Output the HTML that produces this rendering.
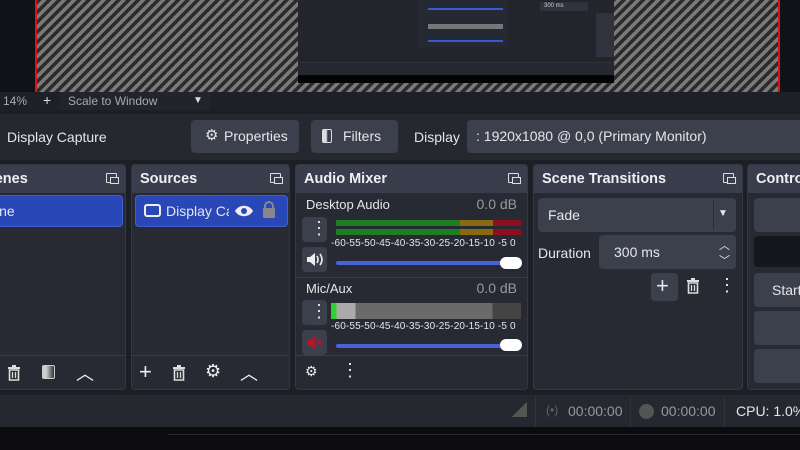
<!DOCTYPE html>
<html><head><meta charset="utf-8"><style>
*{box-sizing:border-box;margin:0;padding:0}
body{width:800px;height:450px;overflow:hidden;background:#1d1f26;font-family:"Liberation Sans",sans-serif;color:#e6e6ea;position:relative;font-size:14px;white-space:nowrap}
.a{position:absolute}
.stripes{background:repeating-linear-gradient(135deg,#2b2b2b 0 3.5px,#7a7a7a 3.5px 7px)}
.dock{position:absolute;top:164px;height:226px;background:#272a33;border:1px solid #343744;border-radius:4px;overflow:hidden}
.hd{height:28px;background:#3a3d4b;font-weight:bold;font-size:14.5px;padding:6px 8px;color:#f0f0f4}
.fl{position:absolute;right:8px;top:8px;width:11px;height:10px;border:1.5px solid #ddd;border-radius:1px}
.fl:after{content:"";position:absolute;left:3px;top:3px;width:7px;height:5px;border:1.5px solid #ddd;background:#3a3d4b}
.btn{position:absolute;background:#3c404d;border-radius:4px}
.ft{position:absolute;left:0;right:0;bottom:0;height:34px;border-top:1px solid #3a3d49}
.ic{position:absolute;color:#eee;font-size:18px}
.meter{position:absolute;height:6px}
.tick{position:absolute;font-size:10px;letter-spacing:0.15px}
</style></head><body>
<svg width="0" height="0" style="position:absolute"><defs><symbol id="tr" viewBox="0 0 14 16"><rect x="1" y="2" width="12" height="2" fill="#ddd"/><rect x="5" y="0" width="4" height="2" fill="#ddd"/><path d="M2.5 5h9v10h-9z" fill="none" stroke="#ddd" stroke-width="1.6"/><path d="M5.5 7v6M8.5 7v6" stroke="#ddd" stroke-width="1.3"/></symbol></defs></svg>
<!-- preview -->
<div class="a" style="left:0;top:0;width:800px;height:92px;background:#111218"></div>
<div class="a stripes" style="left:35px;top:0;width:745px;height:92px;border-left:2px solid #e01010;border-right:2px solid #e01010"></div>
<div class="a" style="left:298px;top:0;width:316px;height:83px;background:#23252d"></div>
<div class="a" style="left:298px;top:62px;width:316px;height:13px;background:#262830;border-top:1px solid #333"></div>
<div class="a" style="left:298px;top:75px;width:316px;height:8px;background:#050505"></div>
<div class="a" style="left:418px;top:0;width:90px;height:47px;background:#262933"></div>
<div class="a" style="left:428px;top:24px;width:75px;height:5px;background:#777"></div>
<div class="a" style="left:428px;top:40px;width:75px;height:2px;background:#3a5ad0"></div>
<div class="a" style="left:428px;top:8px;width:75px;height:2px;background:#3a5ad0"></div>
<div class="a" style="left:596px;top:13px;width:18px;height:44px;background:#30333d"></div>
<div class="a" style="left:540px;top:2px;width:48px;height:9px;background:#30333d;font-size:6px;color:#ccc;padding:1px 4px">300 ms</div>
<!-- zoom bar -->
<div class="a" style="left:0;top:92px;width:800px;height:18px;background:#1e2028;font-size:12px;color:#aaa">
<span class="a" style="left:3px;top:2px">14%</span><span class="a" style="left:43px;top:0;color:#ddd;font-size:14px">+</span>
<div class="a" style="left:60px;top:0;width:150px;height:18px;background:#22242c"></div>
<span class="a" style="left:68px;top:2px">Scale to Window</span>
<span class="a" style="left:193px;top:3px;color:#ddd;font-size:10px">▼</span></div>
<!-- source toolbar -->
<div class="a" style="left:0;top:114px;width:800px;height:46px;background:#262830"></div>
<span class="a" style="left:7px;top:129px;font-size:14px">Display Capture</span>
<div class="btn" style="left:191px;top:120px;width:108px;height:33px"><span class="a" style="left:14px;top:6px;font-size:15px">⚙</span><span class="a" style="left:33px;top:8px">Properties</span></div>
<div class="btn" style="left:311px;top:120px;width:87px;height:33px"><span class="a" style="left:11px;top:9px;width:10px;height:14px;border:1.5px solid #ddd;border-radius:2px;background:linear-gradient(90deg,#ddd 40%,#3c404d 60%)"></span><span class="a" style="left:32px;top:8px">Filters</span></div>
<span class="a" style="left:414px;top:129px">Display</span>
<div class="btn" style="left:467px;top:120px;width:340px;height:33px"><span class="a" style="left:9px;top:8px">: 1920x1080 @ 0,0 (Primary Monitor)</span></div>
<!-- scenes -->
<div class="dock" style="left:-10px;width:136px"><div class="hd"><span class="a" style="left:-14px;top:6px">Scenes</span></div><div class="fl"></div>
<div class="a" style="left:0;top:30px;width:132px;height:32px;background:#2a47b8;border-radius:4px;border:1px solid #4060d0"><span class="a" style="left:-17px;top:7px">Scene</span></div>
<div class="ft"><svg class="a" style="left:16px;top:9px" width="14" height="16"><use href="#tr"/></svg><span class="a" style="left:51px;top:9px;width:13px;height:14px;border:1.5px solid #ccc;border-radius:2px;background:linear-gradient(90deg,#ccc 30%,#333)"></span><span class="ic" style="left:85px;top:4px">︿</span><span class="ic" style="left:130px;top:4px">⋮</span></div></div>
<!-- sources -->
<div class="dock" style="left:131px;width:159px"><div class="hd">Sources</div><div class="fl"></div>
<div class="a" style="left:3px;top:30px;width:153px;height:32px;background:#2a47b8;border-radius:4px;border:1px solid #4060d0">
<span class="a" style="left:8px;top:8px;width:17px;height:13px;border:2px solid #eee;border-radius:3px"></span>
<span class="a" style="left:30px;top:7px;width:63px;overflow:hidden;white-space:nowrap">Display Capture</span>
<svg class="a" style="left:98px;top:8px" width="20" height="14"><path d="M1 7C5 0 15 0 19 7C15 14 5 14 1 7Z" fill="#eee"/><circle cx="10" cy="7" r="3" fill="#2a47b8"/></svg>
<span class="a" style="left:127px;top:12px;width:12px;height:10px;background:#888;border-radius:1px"></span><span class="a" style="left:128px;top:5px;width:10px;height:9px;border:2px solid #888;border-bottom:none;border-radius:5px 5px 0 0"></span></div>
<div class="ft"><span class="ic" style="left:7px;top:3px;font-size:22px">+</span><svg class="a" style="left:40px;top:9px" width="14" height="16"><use href="#tr"/></svg><span class="ic" style="left:73px;top:5px">⚙</span><span class="ic" style="left:108px;top:4px">︿</span><span class="ic" style="left:153px;top:4px">⋮</span></div></div>
<!-- audio mixer -->
<div class="dock" style="left:295px;width:233px"><div class="hd">Audio Mixer</div><div class="fl"></div>
<span class="a" style="left:10px;top:32px;font-size:13px">Desktop Audio</span><span class="a" style="right:10px;top:31px;color:#999;font-size:14px">0.0 dB</span>
<div class="btn" style="left:6px;top:52px;width:25px;height:25px"><span class="a" style="left:8px;top:1px;font-size:18px">⋮</span></div>
<div class="meter" style="left:40px;top:55px;width:185px;background:linear-gradient(90deg,#1f7d24 0 67%,#8a6a10 67% 85%,#8a1020 85%)"></div>
<div class="meter" style="left:40px;top:64px;width:185px;background:linear-gradient(90deg,#1f7d24 0 67%,#8a6a10 67% 85%,#8a1020 85%)"></div>
<span class="tick" style="left:35px;top:73px">-60-55-50-45-40-35-30-25-20-15-10 -5 0</span>
<div class="btn" style="left:6px;top:82px;width:25px;height:25px"><svg class="a" style="left:4px;top:5px" width="18" height="15"><path d="M1 5h3l5-4v13l-5-4H1z" fill="#eee"/><path d="M11 4q2 3.5 0 7M14 2q4 5.5 0 11" stroke="#eee" stroke-width="1.6" fill="none"/></svg></div>
<div class="a" style="left:40px;top:96px;width:180px;height:4px;background:#4a62d8;border-radius:2px"></div>
<div class="a" style="left:204px;top:92px;width:22px;height:12px;background:#fff;border-radius:6px"></div>
<div class="a" style="left:0;top:112px;width:233px;height:1px;background:#3a3d49"></div>
<span class="a" style="left:10px;top:116px;font-size:13px">Mic/Aux</span><span class="a" style="right:10px;top:115px;color:#999;font-size:14px">0.0 dB</span>
<div class="btn" style="left:6px;top:135px;width:25px;height:25px"><span class="a" style="left:8px;top:1px;font-size:18px">⋮</span></div>
<div class="a" style="left:35px;top:138px;width:190px;height:16px;background:linear-gradient(90deg,#2fd02f 0 3%,#aaa 3% 13%,#6a6a6a 13% 85%,#444 85%)"></div>
<span class="tick" style="left:35px;top:156px">-60-55-50-45-40-35-30-25-20-15-10 -5 0</span>
<div class="btn" style="left:6px;top:165px;width:25px;height:25px"><svg class="a" style="left:4px;top:5px" width="18" height="15"><path d="M1 5h3l5-4v13l-5-4H1z" fill="#b01828"/><path d="M11 5l5 5M16 5l-5 5" stroke="#b01828" stroke-width="1.6"/></svg></div>
<div class="a" style="left:40px;top:179px;width:180px;height:4px;background:#4a62d8;border-radius:2px"></div>
<div class="a" style="left:204px;top:174px;width:22px;height:12px;background:#fff;border-radius:6px"></div>
<div class="ft"><span class="ic" style="left:9px;top:7px;font-size:14px">⚙</span><span class="ic" style="left:45px;top:4px">⋮</span></div></div>
<!-- transitions -->
<div class="dock" style="left:533px;width:210px"><div class="hd">Scene Transitions</div><div class="fl"></div>
<div class="btn" style="left:4px;top:33px;width:198px;height:34px"><span class="a" style="left:10px;top:9px">Fade</span><span class="a" style="left:180px;top:10px;font-size:10px">▼</span><div class="a" style="left:175px;top:2px;width:1px;height:30px;background:#2d3039"></div></div>
<span class="a" style="left:4px;top:80px">Duration</span>
<div class="btn" style="left:65px;top:70px;width:137px;height:34px"><span class="a" style="left:15px;top:9px">300 ms</span><span class="a" style="left:120px;top:2px;font-size:11px">︿</span><span class="a" style="left:120px;top:17px;font-size:11px">﹀</span></div>
<div class="btn" style="left:117px;top:108px;width:27px;height:28px"><span class="a" style="left:5px;top:0;font-size:22px">+</span></div>
<svg class="a" style="left:152px;top:113px" width="14" height="16"><use href="#tr"/></svg><span class="ic" style="left:184px;top:110px">⋮</span></div>
<!-- controls -->
<div class="dock" style="left:747px;width:60px"><div class="hd">Controls</div>
<div class="btn" style="left:6px;top:33px;width:60px;height:34px"></div>
<div class="a" style="left:6px;top:71px;width:60px;height:31px;background:#16171c;border-radius:4px"></div>
<div class="btn" style="left:6px;top:108px;width:60px;height:34px"><span class="a" style="left:18px;top:9px">Start</span></div>
<div class="btn" style="left:6px;top:146px;width:60px;height:34px"></div>
<div class="btn" style="left:6px;top:184px;width:60px;height:34px"></div></div>
<!-- status -->
<div class="a" style="left:0;top:395px;width:800px;height:32px;background:#262830;color:#999">
<span class="a" style="left:511px;top:8px;width:16px;height:14px;background:linear-gradient(135deg,transparent 50%,#555 50%)"></span>
<div class="a" style="left:535px;top:0;width:1px;height:32px;background:#333"></div>
<span class="a" style="left:546px;top:8px;font-size:12px;color:#666">(•)</span><span class="a" style="left:568px;top:8px">00:00:00</span>
<div class="a" style="left:630px;top:0;width:1px;height:32px;background:#333"></div>
<span class="a" style="left:639px;top:9px;width:15px;height:15px;border-radius:50%;background:#555"></span><span class="a" style="left:661px;top:8px">00:00:00</span>
<div class="a" style="left:724px;top:0;width:1px;height:32px;background:#333"></div>
<span class="a" style="left:736px;top:8px;color:#e6e6ea">CPU: 1.0%</span></div>
<div class="a" style="left:0;top:427px;width:800px;height:23px;background:#0c0c0e"></div>
<div class="a" style="left:168px;top:434px;width:632px;height:1px;background:#2a2a2e"></div>
</body></html>
